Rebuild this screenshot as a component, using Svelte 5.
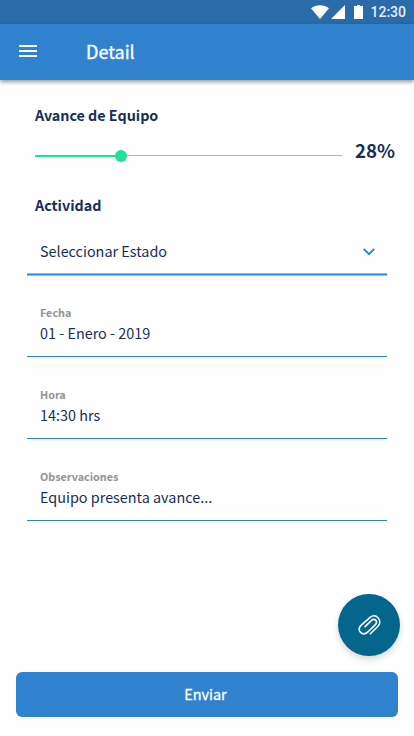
<script lang="ts">
    let progress = $state(28);
    const title = "Detail";
    const fields = [
        { label: "Fecha", value: "01 - Enero - 2019" },
        { label: "Hora", value: "14:30 hrs" },
        { label: "Observaciones", value: "Equipo presenta avance..." },
    ];
</script>

<div class="screen">
    <div class="statusBar">
        <svg class="wifi" width="18" height="14" viewBox="0 0 18 14">
            <path d="M0 3.2C5 -0.9 13 -0.9 18 3.2L9 14Z" fill="#fff" />
        </svg>
        <svg class="signal" width="14" height="14" viewBox="0 0 14 14">
            <path d="M14 0V14H0Z" fill="#fff" />
        </svg>
        <svg class="battery" width="9" height="14" viewBox="0 0 9 14">
            <path d="M0 1H3V0H6V1H9V14H0Z" fill="#fff" />
        </svg>
        <span class="clock">12:30</span>
    </div>

    <header>
        <button class="menu" aria-label="Menu">
            <svg width="18" height="12" viewBox="0 0 18 12">
                <path d="M0 0H18V2H0ZM0 5H18V7H0ZM0 10H18V12H0Z" fill="#fff" />
            </svg>
        </button>
        <h1>{title}</h1>
    </header>

    <main>
        <h2>Avance de Equipo</h2>
        <div class="progress">
            <div class="track">
                <div class="fill" style="width: {progress}%"></div>
                <div class="knob" style="left: {progress}%"></div>
            </div>
            <span class="percent">{progress}%</span>
        </div>

        <h2 class="activity">Actividad</h2>
        <div class="select">
            <span>Seleccionar Estado</span>
            <svg width="14" height="10" viewBox="0 0 14 10">
                <path d="M1.7 1.9L7 7.2L12.3 1.9" fill="none" stroke="#3182ce" stroke-width="1.9" />
            </svg>
        </div>

        {#each fields as field}
            <div class="field">
                <span class="label">{field.label}</span>
                <span class="value">{field.value}</span>
            </div>
        {/each}
    </main>

    <button class="attach" aria-label="Adjuntar">
        <svg width="24" height="22" viewBox="0 0 24 22">
            <path
                d="M12.9 20.3L21.4 11.8C25.6 6.8 19.4 -1.4 13.1 3.3L3.7 11.6C-0.9 16.4 5.7 22.7 10.6 18.2L18.6 10.4C21.2 7.2 17.6 3.7 14.5 6.4L7.6 13.1"
                fill="none"
                stroke="#fff"
                stroke-width="1.6"
            />
        </svg>
    </button>
    <button class="send">Enviar</button>
</div>

<style>
    :global(body) {
        background: #fefefe;
    }

    .screen {
        position: relative;
        display: flex;
        flex-direction: column;
        box-sizing: border-box;
        width: 414px;
        height: 736px;
        padding-bottom: 19px;
        font-family: "Noto Sans CJK SC", "Noto Sans", sans-serif;
        color: #1a2f54;
        overflow: hidden;
    }

    .statusBar {
        display: flex;
        justify-content: flex-end;
        align-items: center;
        height: 24px;
        box-sizing: border-box;
        padding-right: 8px;
        background: #296ca9;
    }

    .signal {
        margin-left: 2px;
    }

    .battery {
        margin-left: 9px;
    }

    .clock {
        margin-left: 7px;
        font: 500 14px/24px Roboto, sans-serif;
        color: #e6eef5;
    }

    header {
        display: flex;
        align-items: center;
        height: 56px;
        padding-left: 19px;
        background: #3182ce;
        box-shadow: 0 2px 4px rgba(0, 0, 0, 0.4);
    }

    button {
        border: 0;
        padding: 0;
        font-family: inherit;
    }

    .menu {
        display: flex;
        margin-top: -2px;
        background: none;
    }

    h1 {
        margin: 0 0 2px 49px;
        font-size: 18px;
        font-weight: 400;
        line-height: 28px;
        color: #fff;
        -webkit-text-stroke: 0.3px #fff;
    }

    main {
        flex: 1;
        padding: 24px 0 0 27px;
    }

    h2 {
        margin: 0 0 0 8px;
        font-size: 14.3px;
        font-weight: 700;
        line-height: 22px;
    }

    .progress {
        display: flex;
        align-items: center;
        height: 30px;
        margin: 10px 0 0 8px;
    }

    .track {
        position: relative;
        width: 307px;
        height: 1px;
        margin-top: 8px;
        background: #b5b5b5;
    }

    .fill {
        height: 2px;
        background: #1ce295;
    }

    .knob {
        position: absolute;
        top: -5px;
        width: 12px;
        height: 12px;
        margin-left: -6px;
        border-radius: 50%;
        background: #1ce295;
    }

    .percent {
        margin: 0 0 2px 13px;
        font-size: 18.7px;
        font-weight: 700;
        line-height: 28px;
    }

    .activity {
        margin-top: 28px;
    }

    .select {
        display: flex;
        justify-content: space-between;
        align-items: center;
        box-sizing: border-box;
        width: 360px;
        height: 59px;
        padding: 14px 11px 2px 13px;
        background: linear-gradient(#98c1e7 1px, #3182ce 1px) bottom / 100% 2px no-repeat;
        box-shadow: 0 1px 0 #98c1e7;
        font-size: 14.4px;
        line-height: 22px;
    }

    .select span {
        margin-bottom: 2px;
    }

    .field {
        display: flex;
        flex-direction: column;
        justify-content: flex-end;
        box-sizing: border-box;
        width: 360px;
        height: 82px;
        padding: 0 0 12px 13px;
        border-bottom: 1px solid #3182ce;
    }

    .label {
        margin-bottom: 1px;
        font-size: 10.8px;
        font-weight: 700;
        line-height: 18px;
        color: #949494;
    }

    .value {
        font-size: 14.4px;
        line-height: 22px;
    }

    /* floats above the form */
    .attach {
        position: absolute;
        right: 14px;
        bottom: 80px;
        display: flex;
        justify-content: center;
        align-items: center;
        width: 62px;
        height: 62px;
        padding-right: 1px;
        border-radius: 50%;
        background: #05668d;
        box-shadow: 0 3px 6px rgba(0, 0, 0, 0.16);
    }

    .send {
        height: 45px;
        margin: 0 16px;
        padding: 0 3px 2px 0;
        border-radius: 6px;
        background: #3182ce;
        color: #fff;
        font-size: 14.4px;
        font-weight: 400;
        line-height: 43px;
        -webkit-text-stroke: 0.3px #fff;
    }
</style>
